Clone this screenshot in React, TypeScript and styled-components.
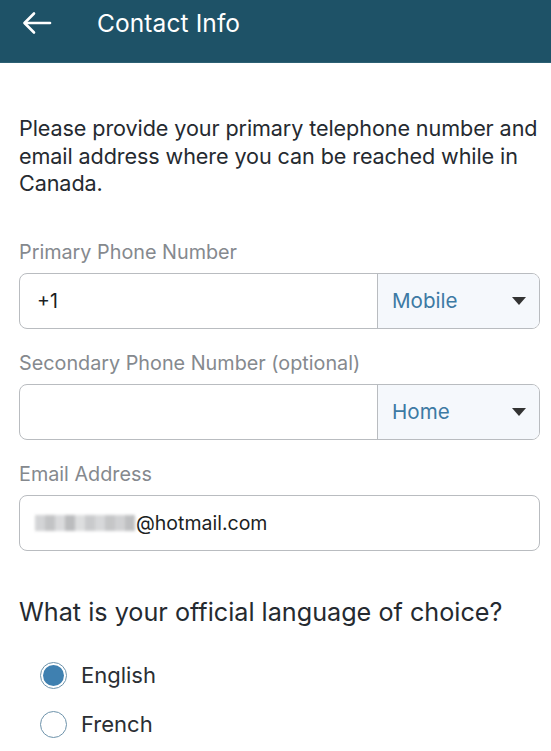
import React from "react";
import styled, { createGlobalStyle } from "styled-components";

const Global = createGlobalStyle`
  html, body { margin: 0; padding: 0; background: #ffffff; }
  body { font-family: Inter, "Noto Sans", sans-serif; -webkit-font-smoothing: antialiased; }
  * { box-sizing: border-box; }
`;

const Page = styled.div`
  width: 551px;
  height: 751px;
  overflow: hidden;
  background: #fff;
  display: flex;
  flex-direction: column;
`;

const Header = styled.header`
  height: 63px;
  flex-shrink: 0;
  background: #1e5267;
  border-bottom: 1px solid #2c6073;
  display: flex;
  align-items: center;
  padding: 0 0 16px 22px;
  gap: 45px;
  color: #fff;
`;

const Title = styled.h1`
  margin: 0;
  font-size: 24.5px;
  font-weight: 400;
  letter-spacing: 0.1px;
`;

const Content = styled.main`
  padding: 52px 11px 0 19px;
  display: flex;
  flex-direction: column;
`;

const Intro = styled.p`
  margin: 0 0 42px 0;
  font-size: 21.6px;
  line-height: 27.5px;
  color: #252a30;
  letter-spacing: -0.1px;
`;

const Field = styled.div`
  display: flex;
  flex-direction: column;
  gap: 9px;
  margin-bottom: 22px;
`;

const Label = styled.label`
  font-size: 19.8px;
  line-height: 24px;
  color: #85898e;
`;

const InputBox = styled.div`
  height: 56px;
  border: 1px solid #b9bcc0;
  border-radius: 8px;
  display: flex;
  overflow: hidden;
`;

const TextPart = styled.div`
  flex: 1;
  display: flex;
  align-items: center;
  padding-left: 17px;
  font-size: 19.5px;
  color: #1c1f23;
`;

const SelectPart = styled.div`
  width: 162px;
  border-left: 1px solid #b9bcc0;
  background: #f5f8fc;
  display: flex;
  align-items: center;
  justify-content: space-between;
  padding: 0 13px 0 14px;
  font-size: 20.6px;
  color: #3d7aa4;
`;

const Caret = styled.span`
  width: 0;
  height: 0;
  border-left: 7px solid transparent;
  border-right: 7px solid transparent;
  border-top: 8px solid #333;
`;

const Blur = styled.span`
  display: inline-flex;
  width: 100px;
  height: 16px;
  margin-left: -2px;
  margin-right: 1px;
  filter: blur(1.5px);
  opacity: 0.9;
`;

const Px = styled.span<{ $c: string }>`
  flex: 1;
  background: ${(p) => p.$c};
`;

const Question = styled.h2`
  margin: 24px 0 35px 0;
  font-size: 25.2px;
  line-height: 30px;
  font-weight: 400;
  color: #252a30;
`;

const Options = styled.div`
  display: flex;
  flex-direction: column;
  gap: 22px;
  padding-left: 21px;
`;

const Option = styled.label`
  display: flex;
  align-items: center;
  gap: 14px;
  font-size: 22px;
  color: #2a2e33;
`;

const Radio = styled.span<{ $on?: boolean }>`
  width: 27px;
  height: 27px;
  border-radius: 50%;
  border: 1px solid #6e93ab;
  background: #fff;
  display: flex;
  align-items: center;
  justify-content: center;
  &::after {
    content: "";
    width: 21px;
    height: 21px;
    border-radius: 50%;
    background: ${(p) => (p.$on ? "#3f80b0" : "transparent")};
  }
`;

const Back = () => (
  <svg width="30" height="24" viewBox="0 0 30 24" fill="none" stroke="#fff" strokeWidth="2.6" strokeLinecap="round" strokeLinejoin="round">
    <path d="M28 12H3" />
    <path d="M12 2.5L2.5 12L12 21.5" />
  </svg>
);

const blocks = ["#cfd0d2", "#bcbdbf", "#d6d7d9", "#b4b5b7", "#dadbdc", "#c4c5c7", "#d3d4d6", "#bfc0c2", "#cccdcf", "#b8b9bb"];

export default function App() {
  return (
    <Page>
      <Global />
      <Header>
        <Back />
        <Title>Contact Info</Title>
      </Header>
      <Content>
        <Intro>
          Please provide your primary telephone number and email address where you can be reached while in Canada.
        </Intro>
        <Field>
          <Label>Primary Phone Number</Label>
          <InputBox>
            <TextPart>+1</TextPart>
            <SelectPart>
              Mobile
              <Caret />
            </SelectPart>
          </InputBox>
        </Field>
        <Field>
          <Label>Secondary Phone Number (optional)</Label>
          <InputBox>
            <TextPart />
            <SelectPart>
              Home
              <Caret />
            </SelectPart>
          </InputBox>
        </Field>
        <Field>
          <Label>Email Address</Label>
          <InputBox>
            <TextPart>
              <Blur>
                {blocks.map((c, i) => (
                  <Px key={i} $c={c} />
                ))}
              </Blur>
              @hotmail.com
            </TextPart>
          </InputBox>
        </Field>
        <Question>What is your official language of choice?</Question>
        <Options>
          <Option>
            <Radio $on />
            English
          </Option>
          <Option>
            <Radio />
            French
          </Option>
        </Options>
      </Content>
    </Page>
  );
}
